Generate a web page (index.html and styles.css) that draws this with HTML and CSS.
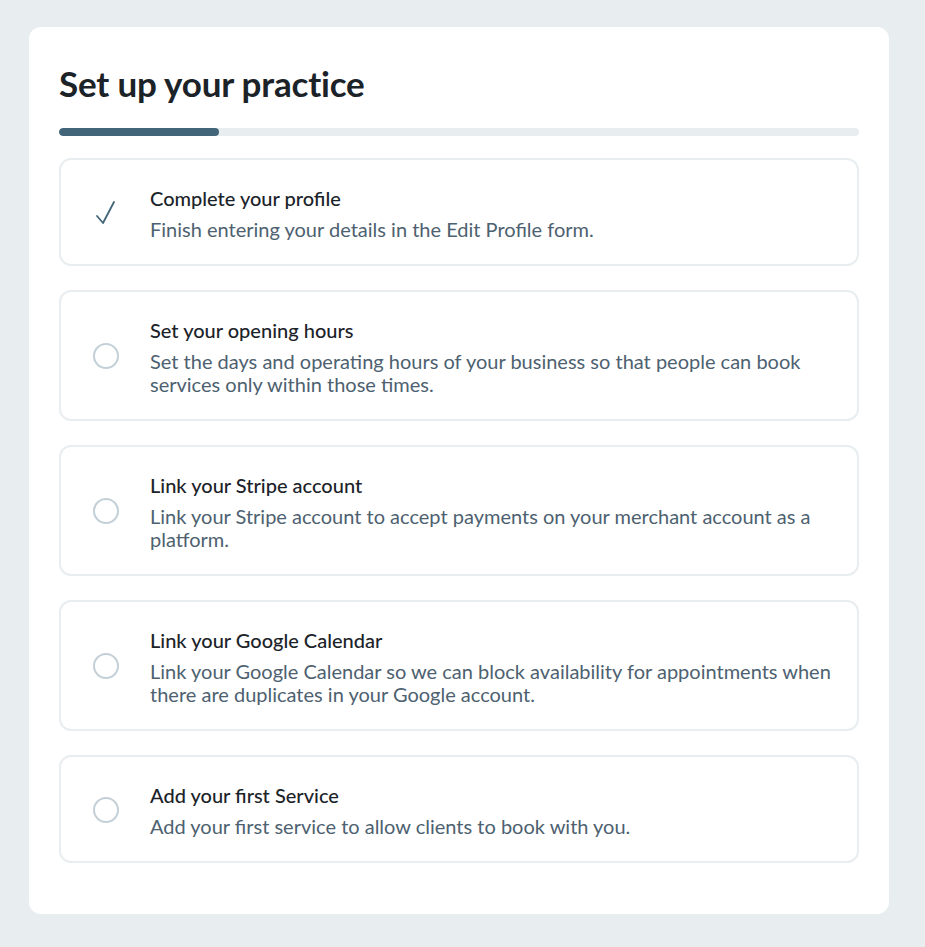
FILE: index.html
```html
<!DOCTYPE html>
<html lang="en">
<head>
<meta charset="utf-8">
<title>Set up your practice</title>
<link rel="stylesheet" href="styles.css">
</head>
<body>
<main class="card">
  <h1 class="title">Set up your practice</h1>
  <div class="progress"><div class="progress-fill" style="width:20%"></div></div>
  <ul class="steps">
    <li class="step">
      <span class="step-icon done">
        <svg width="26" height="26" viewBox="0 0 26 26"><path d="M4 16 L10 23 L21 2" fill="none" stroke="#436579" stroke-width="1.8" stroke-linecap="round" stroke-linejoin="round"/></svg>
      </span>
      <div class="step-body">
        <div class="step-title">Complete your profile</div>
        <p class="step-desc">Finish entering your details in the Edit Profile form.</p>
      </div>
    </li>
    <li class="step">
      <span class="step-icon circle"></span>
      <div class="step-body">
        <div class="step-title">Set your opening hours</div>
        <p class="step-desc">Set the days and operating hours of your business so that people can book services only within those times.</p>
      </div>
    </li>
    <li class="step">
      <span class="step-icon circle"></span>
      <div class="step-body">
        <div class="step-title">Link your Stripe account</div>
        <p class="step-desc">Link your Stripe account to accept payments on your merchant account as a platform.</p>
      </div>
    </li>
    <li class="step">
      <span class="step-icon circle"></span>
      <div class="step-body">
        <div class="step-title">Link your Google Calendar</div>
        <p class="step-desc">Link your Google Calendar so we can block availability for appointments when there are duplicates in your Google account.</p>
      </div>
    </li>
    <li class="step">
      <span class="step-icon circle"></span>
      <div class="step-body">
        <div class="step-title">Add your first Service</div>
        <p class="step-desc">Add your first service to allow clients to book with you.</p>
      </div>
    </li>
  </ul>
</main>
</body>
</html>
```

FILE: styles.css
```css
* { box-sizing: border-box; }
html, body { margin: 0; padding: 0; }
body {
  background: #e8edf0;
  font-family: "Lato", "Liberation Sans", sans-serif;
  padding: 27px 36px 33px 29px;
}
.card {
  background: #fff;
  border-radius: 12px;
  width: 860px;
  padding: 30px 30px 51px 30px;
}
.title {
  margin: 0;
  font-family: "Lato", "Liberation Sans", sans-serif;
  font-weight: 700;
  font-size: 35px;
  line-height: 52px;
  color: #1b2329;
  letter-spacing: -0.2px;
}
.progress {
  margin-top: 19px;
  height: 8px;
  border-radius: 4px;
  background: #e8edf0;
  overflow: hidden;
}
.progress-fill {
  height: 100%;
  background: #436579;
  border-radius: 4px;
}
.steps {
  list-style: none;
  margin: 22px 0 0 0;
  padding: 0;
  display: flex;
  flex-direction: column;
  gap: 24px;
}
.step {
  border: 2px solid #e8edf0;
  border-radius: 12px;
  padding: 24px 20px 23px 32px;
  display: flex;
  align-items: center;
  gap: 31px;
}
.step-icon {
  flex: none;
  width: 26px;
  height: 26px;
  display: block;
}
.step-icon svg { display: block; }
.step-icon.circle {
  border: 2px solid #c3d0d7;
  border-radius: 50%;
}
.step-body { flex: 1; min-width: 0; }
.step-title {
  font-family: "Lato", "Liberation Sans", sans-serif;
  font-weight: 500;
  font-size: 20px;
  line-height: 28px;
  color: #1b2329;
}
.step-desc {
  margin: 6px 0 0 0;
  font-size: 20px;
  line-height: 23px;
  color: #4d6170;
}
```
